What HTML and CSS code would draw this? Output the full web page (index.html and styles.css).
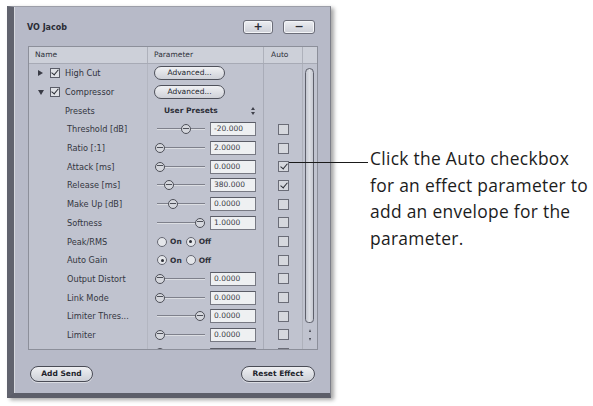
FILE: index.html
```html
<!DOCTYPE html>
<html>
<head>
<meta charset="utf-8">
<link rel="stylesheet" href="styles.css">
</head>
<body>
<div class="page">
  <div class="panel">
    <div class="titlebar">
      <span class="title">VO Jacob</span>
      <div class="tbtns">
        <div class="sq">+</div>
        <div class="sq minus">&minus;</div>
      </div>
    </div>
    <div class="table">
      <div class="hdr">
        <div class="h h-name">Name</div>
        <div class="h h-param">Parameter</div>
        <div class="h h-auto">Auto</div>
        <div class="h h-scroll"></div>
      </div>
      <div class="tbody">
        <div class="rows">
          <div class="row">
            <div class="c-name top"><span class="tri-r"></span><span class="cb checked"></span><span class="lbl">High Cut</span></div>
            <div class="c-param"><div class="adv">Advanced...</div></div>
            <div class="c-auto"></div>
          </div>
          <div class="row">
            <div class="c-name top"><span class="tri-d"></span><span class="cb checked"></span><span class="lbl">Compressor</span></div>
            <div class="c-param"><div class="adv">Advanced...</div></div>
            <div class="c-auto"></div>
          </div>
          <div class="row">
            <div class="c-name sub presets">Presets</div>
            <div class="c-param"><span class="presetname">User Presets</span><span class="updown"><i class="up"></i><i class="dn"></i></span></div>
            <div class="c-auto"></div>
          </div>
          <div class="row">
            <div class="c-name sub">Threshold [dB]</div>
            <div class="c-param"><div class="slider"><span class="knob" style="left:24px"></span></div><div class="field">-20.000</div></div>
            <div class="c-auto"><span class="acb"></span></div>
          </div>
          <div class="row">
            <div class="c-name sub">Ratio [:1]</div>
            <div class="c-param"><div class="slider"><span class="knob" style="left:-2px"></span></div><div class="field">2.0000</div></div>
            <div class="c-auto"><span class="acb"></span></div>
          </div>
          <div class="row">
            <div class="c-name sub">Attack [ms]</div>
            <div class="c-param"><div class="slider"><span class="knob" style="left:-2px"></span></div><div class="field">0.0000</div></div>
            <div class="c-auto"><span class="acb checked"></span></div>
          </div>
          <div class="row">
            <div class="c-name sub">Release [ms]</div>
            <div class="c-param"><div class="slider"><span class="knob" style="left:7px"></span></div><div class="field">380.000</div></div>
            <div class="c-auto"><span class="acb checked"></span></div>
          </div>
          <div class="row">
            <div class="c-name sub">Make Up [dB]</div>
            <div class="c-param"><div class="slider"><span class="knob" style="left:11px"></span></div><div class="field">0.0000</div></div>
            <div class="c-auto"><span class="acb"></span></div>
          </div>
          <div class="row">
            <div class="c-name sub">Softness</div>
            <div class="c-param"><div class="slider"><span class="knob" style="left:38px"></span></div><div class="field">1.0000</div></div>
            <div class="c-auto"><span class="acb"></span></div>
          </div>
          <div class="row">
            <div class="c-name sub">Peak/RMS</div>
            <div class="c-param"><div class="radios"><span class="rb"></span><span class="rl">On</span><span class="rb on"></span><span class="rl">Off</span></div></div>
            <div class="c-auto"><span class="acb"></span></div>
          </div>
          <div class="row">
            <div class="c-name sub">Auto Gain</div>
            <div class="c-param"><div class="radios"><span class="rb on"></span><span class="rl">On</span><span class="rb"></span><span class="rl">Off</span></div></div>
            <div class="c-auto"><span class="acb"></span></div>
          </div>
          <div class="row">
            <div class="c-name sub">Output Distort</div>
            <div class="c-param"><div class="slider"><span class="knob" style="left:-2px"></span></div><div class="field">0.0000</div></div>
            <div class="c-auto"><span class="acb"></span></div>
          </div>
          <div class="row">
            <div class="c-name sub">Link Mode</div>
            <div class="c-param"><div class="slider"><span class="knob" style="left:-2px"></span></div><div class="field">0.0000</div></div>
            <div class="c-auto"><span class="acb"></span></div>
          </div>
          <div class="row">
            <div class="c-name sub">Limiter Thres...</div>
            <div class="c-param"><div class="slider"><span class="knob" style="left:38px"></span></div><div class="field">0.0000</div></div>
            <div class="c-auto"><span class="acb"></span></div>
          </div>
          <div class="row">
            <div class="c-name sub">Limiter</div>
            <div class="c-param"><div class="slider"><span class="knob" style="left:-2px"></span></div><div class="field">0.0000</div></div>
            <div class="c-auto"><span class="acb"></span></div>
          </div>
          <div class="row partial">
            <div class="c-name sub"></div>
            <div class="c-param"><div class="slider"><span class="knob" style="left:-2px"></span></div><div class="field"></div></div>
            <div class="c-auto"><span class="acb"></span></div>
          </div>
        </div>
        <div class="scroll">
          <div class="thumb"></div>
          <div class="arrows"><i class="sup"></i><i class="sdn"></i></div>
        </div>
      </div>
    </div>
    <div class="footer">
      <div class="pill">Add Send</div>
      <div class="pill">Reset Effect</div>
    </div>
  </div>
  <div class="callout">Click the Auto checkbox<br>for an effect parameter to<br>add an envelope for the<br>parameter.</div>
  <div class="leader-line"></div>
</div>
</body>
</html>
```

FILE: styles.css
```css
* { box-sizing: border-box; }
html, body { margin: 0; padding: 0; background: #ffffff; }
body { width: 593px; height: 406px; overflow: hidden; }

.page {
  position: relative;
  display: flex;
  align-items: flex-start;
  padding: 6px 0 0 7px;
  height: 406px;
}

.panel {
  width: 324px;
  height: 392px;
  background: #b7bac8;
  border-left: 7px solid #61636e;
  border-top: 1px solid #9c9ea8;
  border-right: 1px solid #7d7f89;
  border-bottom: 5px solid #5c5e69;
  box-shadow: 3px 2px 4px rgba(0,0,0,0.35), inset 1px 0 0 #d6d8de;
  padding: 13px 12px 0 14px;
  font-family: "DejaVu Sans", sans-serif;
  font-size: 8px;
  color: #343641;
  display: flex;
  flex-direction: column;
  flex: none;
}

.titlebar {
  height: 14px;
  display: flex;
  align-items: center;
  justify-content: space-between;
}
.title {
  font-weight: bold;
  font-size: 8px;
  color: #2a2c35;
  margin-left: -1px;
}
.tbtns { display: flex; gap: 10px; margin-right: 3px; }
.sq {
  width: 30px;
  height: 14px;
  border: 1px solid #6b6d78;
  border-radius: 3px;
  background: linear-gradient(#eceef2, #cdcfd7);
  box-shadow: inset 0 0 0 1px #f4f5f8;
  font-weight: bold;
  font-size: 11px;
  line-height: 12px;
  text-align: center;
  color: #2a2c34;
}
.sq.minus { width: 32px; }

.table {
  margin-top: 12px;
  height: 304px;
  border: 1px solid #8c8f9a;
  background: #c0c3cf;
  overflow: hidden;
  display: flex;
  flex-direction: column;
}
.hdr {
  height: 17px;
  display: grid;
  grid-template-columns: 118px 116px 39px 15px;
  background: #cdd0d9;
  border-bottom: 1px solid #a7aab5;
  flex: none;
}
.h {
  font-size: 7.5px;
  line-height: 15px;
  color: #2e3039;
}
.h-name { padding-left: 6px; }
.h-param { padding-left: 6px; border-left: 1px solid #aeb1bb; }
.h-auto { padding-left: 7px; border-left: 1px solid #aeb1bb; }
.h-scroll { border-left: 1px solid #aeb1bb; }

.tbody { flex: 1; display: flex; min-height: 0; }
.rows { width: 273px; display: flex; flex-direction: column; }
.row {
  height: 18.7px;
  flex: none;
  display: grid;
  grid-template-columns: 118px 116px 39px;
}
.c-name {
  display: flex;
  align-items: center;
  white-space: nowrap;
  overflow: hidden;
  font-size: 8.2px;
}
.c-name.top { padding-left: 9px; }
.c-name.sub { padding-left: 38px; }
.c-name.presets { padding-left: 36px; }
.c-param {
  border-left: 1px solid #b3b6c1;
  display: flex;
  align-items: center;
  position: relative;
}
.c-auto {
  border-left: 1px solid #a9acb8;
  display: flex;
  align-items: center;
  justify-content: center;
  position: relative;
}

.tri-r {
  width: 0; height: 0;
  border-left: 5px solid #3a3c46;
  border-top: 3px solid transparent;
  border-bottom: 3px solid transparent;
  margin-right: 7px;
}
.tri-d {
  width: 0; height: 0;
  border-top: 5px solid #3a3c46;
  border-left: 3px solid transparent;
  border-right: 3px solid transparent;
  margin-right: 6px;
}
.cb {
  width: 10px; height: 10px;
  border: 1px solid #5a5c67;
  background: #dfe1e6;
  margin-right: 5px;
  position: relative;
}
.checked::after {
  content: "";
  position: absolute;
  left: 2px; top: -1px;
  width: 3px; height: 6px;
  border-right: 1.5px solid #2b2d35;
  border-bottom: 1.5px solid #2b2d35;
  transform: rotate(40deg);
}
.lbl { color: #30323c; }

.adv {
  margin-left: 6px;
  width: 71px;
  height: 14px;
  border: 1px solid #4f515b;
  border-radius: 7px;
  background: linear-gradient(#f0f1f4, #cfd1d8);
  text-align: center;
  line-height: 12px;
  font-size: 7.5px;
  color: #23252d;
}

.presetname { margin-left: 16px; font-weight: bold; font-size: 7.5px; color: #2c2e38; }
.updown {
  margin-left: 33px;
  display: flex;
  flex-direction: column;
  gap: 2px;
}
.updown .up {
  width: 0; height: 0;
  border-bottom: 3px solid #3f414b;
  border-left: 2px solid transparent;
  border-right: 2px solid transparent;
}
.updown .dn {
  width: 0; height: 0;
  border-top: 3px solid #3f414b;
  border-left: 2px solid transparent;
  border-right: 2px solid transparent;
}

.slider {
  margin-left: 9px;
  width: 48px;
  height: 10px;
  position: relative;
}
.slider::before {
  content: "";
  position: absolute;
  left: 0; right: 0; top: 4px;
  height: 1px;
  background: #7e808b;
  box-shadow: 0 1px 0 #dcdee3;
}
.knob {
  position: absolute;
  top: 0;
  width: 10px;
  height: 10px;
  border: 1.5px solid #4d4f58;
  border-radius: 50%;
  background: #d5d7dd;
}
.knob::after {
  content: "";
  position: absolute;
  left: 1px; right: 1px; top: 2.5px;
  height: 1px;
  background: #4d4f58;
}
.field {
  margin-left: 5px;
  width: 46px;
  height: 14px;
  border: 1px solid #777983;
  border-top-color: #5a5c66;
  background: #eef0f2;
  font-size: 7.5px;
  line-height: 12px;
  padding-left: 3px;
  color: #3a3c46;
}
.partial .c-param, .partial .c-auto { align-items: flex-start; padding-top: 4px; }

.radios { display: flex; align-items: center; margin-left: 9px; }
.rb {
  width: 10px; height: 10px;
  border: 1px solid #666873;
  border-radius: 50%;
  background: #e4e6ea;
  position: relative;
}
.rb.on::after {
  content: "";
  position: absolute;
  left: 2.5px; top: 2.5px;
  width: 3px; height: 3px;
  border-radius: 50%;
  background: #2d2f37;
}
.rl { margin: 0 4px 0 3px; font-weight: bold; font-size: 7.5px; color: #2e3039; }

.acb {
  width: 11px; height: 11px;
  border: 1px solid #6a6c77;
  background: #d6d8de;
  position: relative;
}
.acb.checked::after { left: 3px; top: 0px; }

.leader-line {
  position: absolute;
  left: 289px;
  top: 162px;
  width: 79px;
  height: 1px;
  background: #1a1a1a;
}

.scroll {
  width: 15px;
  border-left: 1px solid #aeb1bb;
  display: flex;
  flex-direction: column;
  padding-left: 2px;
}
.thumb {
  margin-top: 4px;
  width: 9px;
  height: 255px;
  border: 1.5px solid #5e606b;
  border-radius: 5px 5px 4px 4px;
  background: linear-gradient(90deg, #c4c7d0, #dcdee4 50%, #c4c7d0);
}
.arrows {
  display: flex;
  flex-direction: column;
  align-items: center;
  width: 9px;
  gap: 6px;
  margin-top: 6px;
}
.sup {
  width: 0; height: 0;
  border-bottom: 3px solid #3f414b;
  border-left: 1.5px solid transparent;
  border-right: 1.5px solid transparent;
}
.sdn {
  width: 0; height: 0;
  border-top: 3px solid #3f414b;
  border-left: 1.5px solid transparent;
  border-right: 1.5px solid transparent;
}

.footer {
  margin-top: 16px;
  display: flex;
  justify-content: space-between;
  padding: 0 3px 0 2px;
}
.pill {
  height: 16px;
  border: 1px solid #4a4c56;
  border-radius: 8px;
  background: linear-gradient(#eff0f3, #cdd0d7);
  box-shadow: 0 1px 0 #dadce2;
  font-weight: bold;
  font-size: 7.5px;
  line-height: 14px;
  color: #22242c;
  text-align: center;
}
.pill:first-child { width: 63px; }
.pill:last-child { width: 74px; }

.callout {
  margin: 139px 0 0 39px;
  font-family: "Open Sans", sans-serif;
  font-size: 17.4px;
  letter-spacing: 0.3px;
  line-height: 26.7px;
  color: #1c1c1c;
  white-space: nowrap;
}
```
